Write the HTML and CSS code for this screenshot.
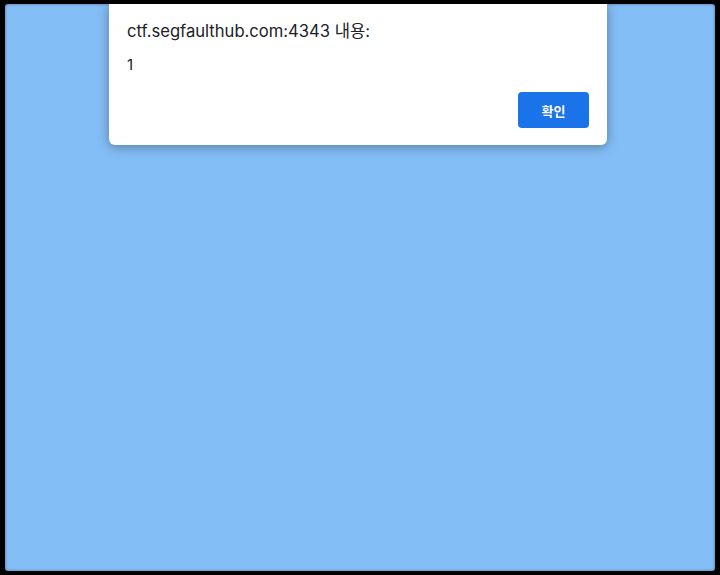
FILE: index.html
```html
<!DOCTYPE html>
<html lang="ko">
  <head>
    <meta charset="UTF-8" />
    <meta name="viewport" content="width=device-width, initial-scale=1.0" />
    <title>Alert</title>
    <link rel="stylesheet" href="styles.css">
  </head>
  <body>
    <div class="frame">
      <div class="page">
        <div class="dialog">
          <p class="title">ctf.segfaulthub.com:4343 내용:</p>
          <p class="message">1</p>
          <div class="actions">
            <button class="ok">확인</button>
          </div>
        </div>
      </div>
    </div>
  </body>
</html>
```

FILE: styles.css
```css
* {
  margin: 0;
  padding: 0;
  box-sizing: border-box;
}
body {
  background-color: #000;
  font-family: Inter, "Noto Sans CJK KR", sans-serif;
}
.frame {
  width: 720px;
  height: 575px;
  padding: 4px 5px 4px 5px;
}
.page {
  height: 100%;
  background-color: #84bef6;
  border-radius: 3px;
  box-shadow: inset 0 0 3px rgba(0, 0, 0, 0.45);
}
.dialog {
  width: 498px;
  height: 141px;
  margin-left: 104px;
  background: #fff;
  border-radius: 0 0 6px 6px;
  box-shadow: 0 2px 12px rgba(0, 0, 0, 0.35);
  padding: 17px 18px 0 18px;
  color: #202124;
}
.title {
  font-size: 16.6px;
  line-height: 20px;
}
.message {
  font-size: 15px;
  line-height: 20px;
  margin-top: 14px;
}
.actions {
  display: flex;
  justify-content: flex-end;
  margin-top: 17px;
}
.ok {
  width: 71px;
  height: 36px;
  border: none;
  border-radius: 4px;
  background-color: #1a73e8;
  color: #fff;
  font-family: "Noto Sans CJK KR", sans-serif;
  font-size: 13px;
  font-weight: 700;
}
```
